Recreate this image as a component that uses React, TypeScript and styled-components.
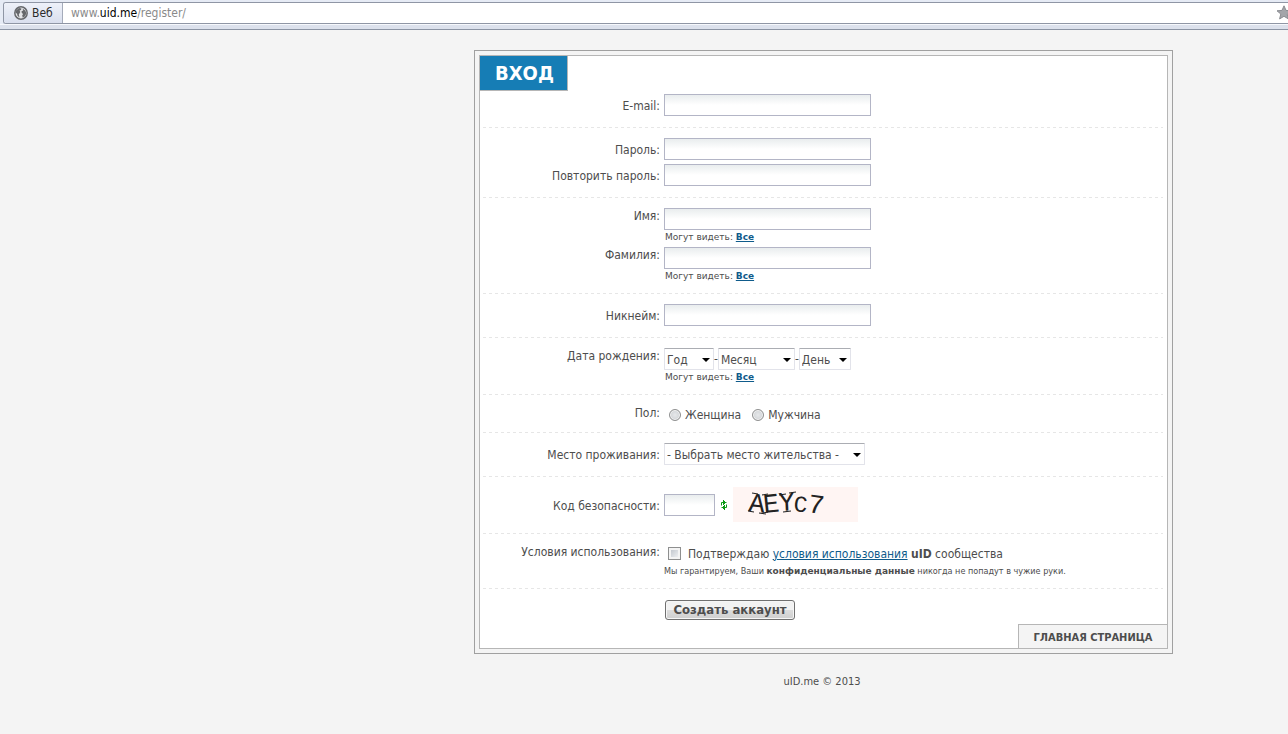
import React from "react";
import styled, { createGlobalStyle } from "styled-components";

const Global = createGlobalStyle`
  *, *::before, *::after { box-sizing: border-box; }
  body {
    margin: 0;
    background: #f4f4f4;
    color: #4d4d4d;
    font: 12px/16px "DejaVu Sans Condensed", "DejaVu Sans", sans-serif;
  }
  input, select, button { margin: 0; font: inherit; color: inherit; }
  a { color: #0f5b8b; }
`;

const Toolbar = styled.header`
  height: 30px;
  padding: 2px 0 0 3px;
  background: linear-gradient(#e6ebf5 0 24px, #f6f8fc 24px 25px, #dce1ec 25px);
  border-bottom: 1px solid #8b94a4;
`;

const AddressBar = styled.div`
  display: flex;
  height: 22px;
  border: 1px solid #8f96a5;
  border-right: 0;
  border-radius: 3px 0 0 3px;
  background: #fff;
  overflow: hidden;
`;

const SiteButton = styled.button`
  display: flex;
  align-items: center;
  gap: 4px;
  width: 59px;
  padding: 0 0 0 10px;
  border: 0;
  border-right: 1px solid #a4abba;
  background: linear-gradient(#eef1f9, #d9dfee);
  color: #2b2b2b;
`;

const Address = styled.div`
  flex: 1;
  padding-left: 8px;
  line-height: 20px;
  color: #8a8a8a;
  b { font-weight: 400; color: #000; }
`;

const StarBox = styled.div`
  flex: none;
  width: 12px;
  overflow: hidden;
  padding-top: 2px;
  svg { display: block; }
`;

const Page = styled.div`
  display: grid;
  grid-template-columns: 474fr minmax(0, 699px) 115fr;
  padding-top: 20px;
`;

const Column = styled.main`
  grid-column: 2;
`;

const Frame = styled.div`
  padding: 4px;
  border: 1px solid #a0a0a0;
`;

const Card = styled.form`
  display: flex;
  flex-direction: column;
  align-items: stretch;
  border: 1px solid #b6b6b6;
  background: #fff;
`;

const Title = styled.h1`
  align-self: flex-start;
  margin: 0;
  height: 35px;
  padding: 0 13px 0 15px;
  border: solid #b6b6b6;
  border-width: 0 1px 1px 0;
  background: #167db5;
  color: #fff;
  font-size: 20px;
  line-height: 35px;
`;

const Section = styled.section<{ $first?: boolean }>`
  display: flex;
  flex-direction: column;
  gap: 4px;
  margin: 0 4px 0 3px;
  padding: ${(p) => (p.$first ? 3 : 10)}px 0 12px;
  background: repeating-linear-gradient(90deg, #e6e6e6 0 3px, transparent 3px 6px) bottom / 100% 1px no-repeat;
`;

const Label = styled.label`
  text-align: right;
`;

const Row = styled.div<{ $top?: boolean }>`
  display: grid;
  grid-template-columns: 177px minmax(0, 1fr);
  column-gap: 4px;
  align-items: ${(p) => (p.$top ? "start" : "center")};
  > ${Label} { padding-top: ${(p) => (p.$top ? 0 : 2)}px; }
`;

const Line = styled.div`
  display: flex;
  align-items: center;
`;

const TextInput = styled.input<{ $short?: boolean }>`
  display: block;
  width: ${(p) => (p.$short ? 51 : 207)}px;
  height: 22px;
  padding: 0 3px;
  border: 1px solid #b3b5c6;
  background: linear-gradient(#e9edee, #fff 10px);
  outline: none;
`;

const Hint = styled.div`
  height: 13px;
  padding-left: 1px;
  font: 9px/15px "DejaVu Sans", sans-serif;
  a { font-weight: 700; }
`;

const Note = styled.div`
  height: 14px;
  font: 9px/17px "DejaVu Sans Condensed", sans-serif;
  b { font-family: "DejaVu Sans", sans-serif; }
`;

const SelectWrap = styled.span<{ $w: number }>`
  position: relative;
  width: ${(p) => p.$w}px;
  &::after {
    content: "";
    position: absolute;
    right: 4px;
    top: 10px;
    border: solid transparent;
    border-width: 4px 4px 0;
    border-top-color: #000;
    pointer-events: none;
  }
`;

const SelectBox = styled.select`
  appearance: none;
  display: block;
  width: 100%;
  height: 22px;
  padding: 2px 0 0 2px;
  border: 1px solid #e2e3ea;
  border-top-color: #abadb3;
  border-radius: 1px;
  background: #fff;
`;

const GenderLine = styled.div`
  display: flex;
  height: 16px;
`;

const Choice = styled.label`
  display: flex;
  align-items: center;
  gap: 4px;
  height: 20px;
  margin: 0 6px 0 5px;
`;

const Radio = styled.input.attrs({ type: "radio" })`
  appearance: none;
  width: 12px;
  height: 12px;
  border: 1px solid #8e8f8f;
  border-radius: 50%;
  background: radial-gradient(#e6e8ea, #c9cccf);
  box-shadow: inset 0 0 0 1px #f4f4f4;
`;

const Tick = styled.input.attrs({ type: "checkbox" })`
  appearance: none;
  width: 13px;
  height: 13px;
  margin: 0 7px 0 4px;
  border: 1px solid #8e8f8f;
  background: linear-gradient(135deg, #b8bec6, #f8f9fa);
  box-shadow: inset 0 0 0 2px #f4f4f4;
`;

const TermsLine = styled(Line)`
  height: 19px;
`;

const RefreshButton = styled.button`
  display: flex;
  padding: 0;
  margin: 0 5px 0 5px;
  border: 0;
  background: none;
`;

const Captcha = styled.svg`
  display: block;
  width: 125px;
  height: 35px;
  background: #fff5f3;
  font-family: "Liberation Mono", monospace;
`;

const SubmitRow = styled.div`
  margin: 0 4px 0 3px;
  padding: 11px 0 4px 182px;
`;

const Submit = styled.button`
  display: block;
  width: 130px;
  height: 20px;
  padding: 0;
  border: 1px solid #707070;
  border-radius: 3px;
  background: linear-gradient(#f2f2f2 0 9px, #dcdcdc 9px, #cfcfcf);
  box-shadow: inset 0 0 0 1px #f6f6f6;
  font-weight: 700;
  font-size: 13px;
  line-height: 18px;
`;

const HomeLink = styled.a`
  align-self: flex-end;
  width: 149px;
  height: 24px;
  border: solid #b6b6b6;
  border-width: 1px 0 0 1px;
  background: #f4f4f4;
  color: #4d4d4d;
  font-weight: 700;
  font-size: 11px;
  line-height: 25px;
  text-align: center;
  text-decoration: none;
`;

const Footer = styled.footer`
  padding: 20px 3px 0 0;
  font-size: 11px;
  text-align: center;
`;

function Field({ id, label, hint }: { id: string; label: string; hint?: boolean }) {
  return (
    <Row $top={hint}>
      <Label htmlFor={id}>{label}</Label>
      <div>
        <TextInput id={id} type={id.startsWith("pass") ? "password" : "text"} />
        {hint && <Visibility />}
      </div>
    </Row>
  );
}

function Visibility() {
  return (
    <Hint>
      Могут видеть: <a href="#visibility">Все</a>
    </Hint>
  );
}

function Select({ id, label, text, w }: { id?: string; label?: string; text: string; w: number }) {
  return (
    <SelectWrap $w={w}>
      <SelectBox id={id} aria-label={label}>
        <option>{text}</option>
      </SelectBox>
    </SelectWrap>
  );
}

export default function App() {
  return (
    <>
      <Global />
      <Toolbar>
        <AddressBar>
          <SiteButton type="button">
            <svg width="14" height="14" viewBox="0 0 14 14">
              <circle cx="7" cy="7" r="6.2" fill="#e4e5e8" stroke="#66686c" strokeWidth="1.5" />
              <path d="M2 4.500 5 2l2.500.6-.5 1.400-1.500.5.8 1.500L4.800 8.500l.7 3-2-1.700-.5-2.300L1.500 7zM8.500 2.500l3 2.200.8 2.800-1.300 2.800-2.300 1.500-.5-2.500 1-1.300L7.800 7l-.3-1.700 1.700-.8z" fill="#66686c" />
            </svg>
            Веб
          </SiteButton>
          <Address>
            www.<b>uid.me</b>/register/
          </Address>
          <StarBox>
            <svg width="16" height="15" viewBox="0 0 16 15">
              <path d="M8 .8l2 4.600 5 .4-3.800 3.200 1.200 4.900L8 11.300l-4.400 2.600 1.200-4.900L1 5.800l5-.4z" fill="#a3a5a9" stroke="#8a8c91" />
            </svg>
          </StarBox>
        </AddressBar>
      </Toolbar>
      <Page>
        <Column>
          <Frame>
            <Card>
              <Title>ВХОД</Title>
              <Section $first>
                <Field id="email" label="E-mail:" />
              </Section>
              <Section>
                <Field id="password" label="Пароль:" />
                <Field id="password2" label="Повторить пароль:" />
              </Section>
              <Section>
                <Field id="name" label="Имя:" hint />
                <Field id="surname" label="Фамилия:" hint />
              </Section>
              <Section>
                <Field id="nick" label="Никнейм:" />
              </Section>
              <Section>
                <Row $top>
                  <Label htmlFor="year">Дата рождения:</Label>
                  <div>
                    <Line>
                      <Select id="year" text="Год" w={50} />-
                      <Select label="Месяц" text="Месяц" w={77} />-
                      <Select label="День" text="День" w={52} />
                    </Line>
                    <Visibility />
                  </div>
                </Row>
              </Section>
              <Section>
                <Row $top>
                  <Label as="span">Пол:</Label>
                  <GenderLine>
                    <Choice>
                      <Radio name="gender" />
                      Женщина
                    </Choice>
                    <Choice>
                      <Radio name="gender" />
                      Мужчина
                    </Choice>
                  </GenderLine>
                </Row>
              </Section>
              <Section>
                <Row>
                  <Label htmlFor="place">Место проживания:</Label>
                  <Select id="place" text="- Выбрать место жительства -" w={201} />
                </Row>
              </Section>
              <Section>
                <Row>
                  <Label htmlFor="code">Код безопасности:</Label>
                  <Line>
                    <TextInput id="code" $short />
                    <RefreshButton type="button" aria-label="Обновить код">
                      <svg width="8" height="12" viewBox="0 0 8 12" fill="none" stroke="#0a9a14">
                        <path d="M1.500 6.500V3.500H6.500M3.500 1v5M4.500 2v3M6.500 5.500v3H1.500M4.500 6v5M3.500 7v3" />
                      </svg>
                    </RefreshButton>
                    <Captcha viewBox="0 0 125 35" fill="#222">
                      <text x="15" y="24" fontSize="27" transform="rotate(6 15 24)">A</text>
                      <text x="31" y="26" fontSize="27" transform="rotate(-6 31 26)">E</text>
                      <text x="46" y="24" fontSize="27" transform="rotate(-3 46 24)">Y</text>
                      <text x="60" y="24" fontSize="23" transform="rotate(6 60 24)">C</text>
                      <text x="74" y="25" fontSize="27" transform="rotate(8 74 25)">7</text>
                      <path d="M15 24l6 1M26 26l7 1M19 6l6 1M29 8l6-1M30 26l5-1M46 8l7-1M56 6l7-1M50 25l8-1" stroke="#222" strokeWidth="1.200" />
                    </Captcha>
                  </Line>
                </Row>
              </Section>
              <Section>
                <Row $top>
                  <Label htmlFor="terms">Условия использования:</Label>
                  <div>
                    <TermsLine>
                      <Tick id="terms" />
                      <span>
                        Подтверждаю <a href="#terms">условия использования</a> <b>uID</b> сообщества
                      </span>
                    </TermsLine>
                    <Note>
                      Мы гарантируем, Ваши <b>конфиденциальные данные</b> никогда не попадут в чужие руки.
                    </Note>
                  </div>
                </Row>
              </Section>
              <SubmitRow>
                <Submit type="button">Создать аккаунт</Submit>
              </SubmitRow>
              <HomeLink href="#home">ГЛАВНАЯ СТРАНИЦА</HomeLink>
            </Card>
          </Frame>
          <Footer>uID.me © 2013</Footer>
        </Column>
      </Page>
    </>
  );
}
